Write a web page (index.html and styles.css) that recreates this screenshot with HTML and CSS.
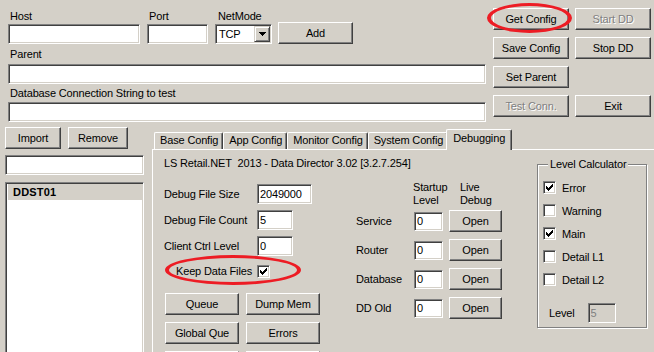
FILE: index.html
```html
<!DOCTYPE html>
<html lang="en">
<head>
  <meta charset="UTF-8" />
  <title>Data Director Config</title>
  <link rel="stylesheet" href="styles.css">
</head>
<body>
  <div class="top">
    <div class="conn">
      <div class="conn-row">
        <div class="field host">
          <span class="lbl">Host</span>
          <input class="edit" type="text" value="" />
        </div>
        <div class="field port">
          <span class="lbl">Port</span>
          <input class="edit" type="text" value="" />
        </div>
        <div class="field mode">
          <span class="lbl lbl-mode">NetMode</span>
          <div class="combo">
            <span class="combo-text">TCP</span>
            <span class="combo-btn">
              <svg width="7" height="4" viewBox="0 0 7 4"><path d="M0 0h7v1H0z M1 1h5v1H1z M2 2h3v1H2z M3 3h1v1H3z" fill="#000"/></svg>
            </span>
          </div>
        </div>
        <button class="btn add">Add</button>
      </div>
      <div class="lbl lbl-parent">Parent</div>
      <input class="edit wide" type="text" value="" />
      <div class="lbl lbl-db">Database Connection String to test</div>
      <input class="edit wide" type="text" value="" />
    </div>

    <div class="actions">
      <div class="marked">
        <button class="btn">Get Config</button>
        <span class="ring ring-get"></span>
      </div>
      <button class="btn" disabled>Start DD</button>
      <button class="btn">Save Config</button>
      <button class="btn">Stop DD</button>
      <button class="btn">Set Parent</button>
      <span></span>
      <button class="btn" disabled>Test Conn.</button>
      <button class="btn">Exit</button>
    </div>
  </div>

  <div class="bottom">
    <div class="side">
      <div class="side-btns">
        <button class="btn import">Import</button>
        <button class="btn remove">Remove</button>
      </div>
      <input class="edit search" type="text" value="" />
      <div class="list">
        <div class="item sel">DDST01</div>
      </div>
    </div>

    <div class="tabs">
      <div class="tab-strip">
        <div class="tab">Base Config</div>
        <div class="tab">App Config</div>
        <div class="tab">Monitor Config</div>
        <div class="tab">System Config</div>
        <div class="tab active">Debugging</div>
      </div>
      <div class="panel">
        <div class="panel-main">
          <div class="title">LS Retail.NET&nbsp; 2013 - Data Director 3.02 [3.2.7.254]</div>
          <div class="cols">
            <div class="dbg-left">
              <div class="frow">
                <span class="flabel">Debug File Size</span>
                <input class="edit w55" type="text" value="2049000" />
              </div>
              <div class="frow">
                <span class="flabel">Debug File Count</span>
                <input class="edit w36" type="text" value="5" />
              </div>
              <div class="frow">
                <span class="flabel">Client Ctrl Level</span>
                <input class="edit w36" type="text" value="0" />
              </div>
              <div class="keep">
                <span>Keep Data Files</span>
                <span class="chk on"><svg width="11" height="11" viewBox="0 0 11 11"><polygon points="2,4 3,4 3,5 4,5 4,6 5,6 5,5 6,5 6,4 7,4 7,3 8,3 8,2 9,2 9,5 8,5 8,6 7,6 7,7 6,7 6,8 5,8 5,9 4,9 4,8 3,8 3,7 2,7" fill="#000" shape-rendering="crispEdges"/></svg></span>
                <span class="ring ring-keep"></span>
              </div>
              <div class="btn-grid">
                <button class="btn">Queue</button>
                <button class="btn">Dump Mem</button>
                <button class="btn">Global Que</button>
                <button class="btn">Errors</button>
                <button class="btn"></button>
                <button class="btn"></button>
              </div>
            </div>

            <div class="dbg-mid">
              <div class="mid-head">
                <span></span>
                <span>Startup<br>Level</span>
                <span>Live<br>Debug</span>
              </div>
              <div class="mid-rows">
                <span>Service</span>
                <input class="edit lvl" type="text" value="0" />
                <button class="btn">Open</button>
                <span>Router</span>
                <input class="edit lvl" type="text" value="0" />
                <button class="btn">Open</button>
                <span>Database</span>
                <input class="edit lvl" type="text" value="0" />
                <button class="btn">Open</button>
                <span>DD Old</span>
                <input class="edit lvl" type="text" value="0" />
                <button class="btn">Open</button>
              </div>
            </div>
          </div>
        </div>

        <fieldset class="levels">
          <legend>Level Calculator</legend>
          <div class="lvl-list">
            <div class="lvl-row"><span class="chk on"><svg width="11" height="11" viewBox="0 0 11 11"><polygon points="2,4 3,4 3,5 4,5 4,6 5,6 5,5 6,5 6,4 7,4 7,3 8,3 8,2 9,2 9,5 8,5 8,6 7,6 7,7 6,7 6,8 5,8 5,9 4,9 4,8 3,8 3,7 2,7" fill="#000" shape-rendering="crispEdges"/></svg></span>Error</div>
            <div class="lvl-row"><span class="chk"></span>Warning</div>
            <div class="lvl-row"><span class="chk on"><svg width="11" height="11" viewBox="0 0 11 11"><polygon points="2,4 3,4 3,5 4,5 4,6 5,6 5,5 6,5 6,4 7,4 7,3 8,3 8,2 9,2 9,5 8,5 8,6 7,6 7,7 6,7 6,8 5,8 5,9 4,9 4,8 3,8 3,7 2,7" fill="#000" shape-rendering="crispEdges"/></svg></span>Main</div>
            <div class="lvl-row"><span class="chk"></span>Detail L1</div>
            <div class="lvl-row"><span class="chk"></span>Detail L2</div>
          </div>
          <div class="lvl-level">
            <span>Level</span>
            <input class="edit result" type="text" value="5" disabled />
          </div>
        </fieldset>
      </div>
    </div>
  </div>
</body>
</html>
```

FILE: styles.css
```css
:root {
  --face: #d4d0c8;
  --shadow: #808080;
  --dark: #404040;
  --light: #ffffff;
  --ring: #ed1c24;
}

* {
  box-sizing: border-box;
}

body {
  margin: 0;
  height: 352px;
  overflow: hidden;
  background: var(--face);
  font-family: 'Liberation Sans', Arial, sans-serif;
  font-size: 11px;
  letter-spacing: -0.15px;
  color: #000;
}

/* classic raised button */
.btn {
  display: block;
  height: 22px;
  padding: 0;
  font: inherit;
  letter-spacing: inherit;
  color: #000;
  background: var(--face);
  border: 1px solid;
  border-color: var(--light) var(--dark) var(--dark) var(--light);
  box-shadow: inset -1px -1px 0 var(--shadow);
}

.btn:disabled {
  color: var(--shadow);
  text-shadow: 1px 1px 0 var(--light);
}

/* classic sunken edit box */
.edit {
  display: block;
  height: 20px;
  margin: 0;
  padding: 0 1px 0 2px;
  font: inherit;
  letter-spacing: inherit;
  color: #000;
  background: #fff;
  border: 1px solid;
  border-color: var(--shadow) var(--light) var(--light) var(--shadow);
  box-shadow: inset 1px 1px 0 var(--dark), inset -1px -1px 0 var(--face);
  outline: none;
}

.edit:disabled {
  background: var(--face);
  color: var(--shadow);
}

.ring {
  position: absolute;
  border: 4px solid var(--ring);
  border-width: 3px 4px;
  border-radius: 50%;
  pointer-events: none;
}

/* top area */
.top {
  display: flex;
  padding: 8px 0 0 8px;
}

.conn {
  width: 478px;
}

.conn-row {
  display: flex;
  align-items: flex-end;
  gap: 7px;
}

.lbl {
  display: block;
  height: 16px;
  line-height: 16px;
  padding-left: 2px;
}

.lbl-mode {
  padding-left: 3px;
}

.host { width: 132px; }
.port { width: 61px; }
.mode { width: 57px; }

.field .edit {
  width: 100%;
}

.add {
  width: 75px;
  margin-left: -1px;
}

.combo {
  display: flex;
  align-items: center;
  height: 20px;
  padding: 1px;
  background: #fff;
  border: 1px solid;
  border-color: var(--shadow) var(--light) var(--light) var(--shadow);
  box-shadow: inset 1px 1px 0 var(--dark), inset -1px -1px 0 var(--face);
}

.combo-text {
  flex: 1;
  padding-left: 2px;
  line-height: 16px;
}

.combo-btn {
  display: flex;
  align-items: center;
  justify-content: center;
  width: 16px;
  height: 16px;
  background: var(--face);
  border: 1px solid;
  border-color: var(--face) var(--dark) var(--dark) var(--face);
  box-shadow: inset 1px 1px 0 var(--light), inset -1px -1px 0 var(--shadow);
}

.lbl-parent {
  height: 20px;
  line-height: 20px;
}

.lbl-db {
  height: 18px;
  line-height: 18px;
}

.wide {
  width: 100%;
}

.actions {
  display: grid;
  grid-template-columns: 76px 76px;
  grid-auto-rows: 22px;
  gap: 7px 6px;
  margin-left: 7px;
  align-content: start;
}

.actions .btn {
  width: 100%;
}

.marked {
  position: relative;
}

.ring-get {
  left: -6px;
  top: -5px;
  width: 85px;
  height: 30px;
}

/* lower area */
.bottom {
  display: flex;
  padding: 5px 0 0 5px;
}

.side {
  flex: none;
  width: 139px;
}

.side-btns {
  display: flex;
  gap: 7px;
}

.import { width: 56px; }
.remove { width: 60px; }

.search {
  width: 100%;
  margin-top: 6px;
}

.list {
  height: 220px;
  margin-top: 7px;
  padding: 1px;
  background: #fff;
  border: 1px solid;
  border-color: var(--shadow) var(--light) var(--light) var(--shadow);
  box-shadow: inset 1px 1px 0 var(--dark), inset -1px -1px 0 var(--face);
}

.item {
  height: 16px;
  line-height: 16px;
  padding-left: 5px;
  font-weight: bold;
  letter-spacing: 0.2px;
}

.item.sel {
  margin-left: 1px;
  background: var(--face);
}

.tabs {
  flex: none;
  width: 520px;
  margin: 2px 0 0 8px;
}

.tab-strip {
  display: flex;
  align-items: flex-end;
  height: 20px;
  padding-left: 2px;
}

.tab {
  height: 17px;
  line-height: 15px;
  padding: 0 4px 0 5px;
  border: 1px solid;
  border-bottom: 0;
  border-color: var(--light) var(--dark) var(--dark) var(--light);
  border-radius: 2px 2px 0 0;
  box-shadow: inset -1px 0 0 var(--shadow);
  background: var(--face);
}

.tab.active {
  position: relative;
  z-index: 1;
  height: 21px;
  line-height: 17px;
  margin: 0 -2px -1px;
  padding: 0 6px;
}

.panel {
  display: flex;
  height: 240px;
  padding: 6px 0 0 11px;
  border: 1px solid;
  border-color: var(--light) var(--dark) var(--dark) var(--light);
  box-shadow: inset -1px -1px 0 var(--shadow);
}

.panel-main {
  width: 338px;
}

.title {
  height: 14px;
  line-height: 14px;
  white-space: nowrap;
}

.cols {
  display: flex;
  gap: 36px;
}

.dbg-left {
  width: 156px;
  padding-top: 14px;
}

.frow {
  display: flex;
  align-items: center;
  height: 20px;
  margin-bottom: 6px;
}

.flabel {
  width: 93px;
}

.w55 { width: 55px; }
.w36 { width: 36px; }

.keep {
  position: relative;
  display: flex;
  align-items: center;
  gap: 5px;
  height: 18px;
  padding-left: 12px;
}

.ring-keep {
  left: 1px;
  top: -7px;
  width: 136px;
  height: 30px;
}

.btn-grid {
  display: grid;
  grid-template-columns: 74px 74px;
  grid-auto-rows: 22px;
  gap: 7px;
  margin: 13px 0 0 1px;
}

.dbg-mid {
  width: 146px;
  padding-top: 11px;
}

.mid-head {
  display: grid;
  grid-template-columns: 57px 47px auto;
  line-height: 13px;
}

.mid-rows {
  display: grid;
  grid-template-columns: 58px 35px 53px;
  grid-auto-rows: 22px;
  row-gap: 7px;
  align-items: center;
  margin-top: 3px;
}

.lvl {
  width: 29px;
  height: 19px;
}

/* checkbox */
.chk {
  flex: none;
  width: 13px;
  height: 13px;
  background: #fff;
  border: 1px solid;
  border-color: var(--shadow) var(--light) var(--light) var(--shadow);
  box-shadow: inset 1px 1px 0 var(--dark), inset -1px -1px 0 var(--face);
}

.chk svg {
  display: block;
}

/* level calculator group */
.levels {
  flex: none;
  width: 110px;
  height: 172px;
  margin: 0 0 0 35px;
  padding: 0 0 0 5px;
  min-width: 0;
  border: 1px solid var(--shadow);
  box-shadow: 1px 1px 0 var(--light), inset 1px 1px 0 var(--light);
}

.levels legend {
  margin-left: 5px;
  padding: 0 2px;
  line-height: 16px;
  background: var(--face);
}

.lvl-list {
  margin-top: 4px;
}

.lvl-row {
  display: flex;
  align-items: center;
  gap: 6px;
  height: 23px;
}

.lvl-level {
  display: flex;
  align-items: center;
  gap: 13px;
  height: 20px;
  margin-top: 12px;
  padding-left: 6px;
}

.result {
  width: 28px;
}
```
